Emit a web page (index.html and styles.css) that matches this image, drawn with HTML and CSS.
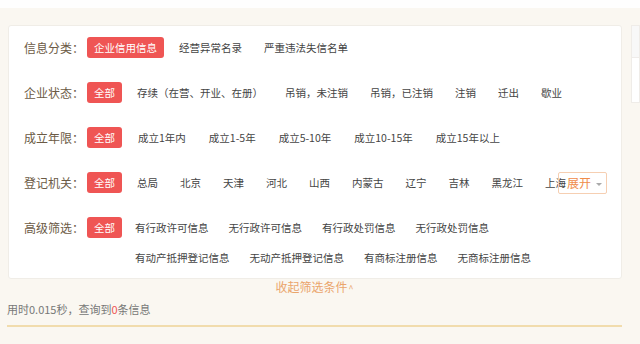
FILE: index.html
```html
<!DOCTYPE html>
<html lang="zh-CN">
<head>
    <meta charset="UTF-8">
    <title>筛选</title>
    <link rel="stylesheet" href="styles.css">
</head>
<body>
    <div class="topbar"></div>
    <div class="main">
        <div class="content">
            <div class="filter">
                <div class="ft-row">
                    <span class="ft-label">信息分类：</span>
                    <div class="ft-items">
                        <a href="#" class="active">企业信用信息</a>
                        <a href="#">经营异常名录</a>
                        <a href="#">严重违法失信名单</a>
                    </div>
                </div>
                <div class="ft-row">
                    <span class="ft-label">企业状态：</span>
                    <div class="ft-items">
                        <a href="#" class="active">全部</a>
                        <a href="#">存续（在营、开业、在册）</a>
                        <a href="#">吊销，未注销</a>
                        <a href="#">吊销，已注销</a>
                        <a href="#">注销</a>
                        <a href="#">迁出</a>
                        <a href="#">歇业</a>
                    </div>
                </div>
                <div class="ft-row">
                    <span class="ft-label">成立年限：</span>
                    <div class="ft-items ft-year">
                        <a href="#" class="active">全部</a>
                        <a href="#">成立1年内</a>
                        <a href="#">成立1-5年</a>
                        <a href="#">成立5-10年</a>
                        <a href="#">成立10-15年</a>
                        <a href="#">成立15年以上</a>
                    </div>
                </div>
                <div class="ft-row">
                    <span class="ft-label">登记机关：</span>
                    <div class="ft-items">
                        <a href="#" class="active">全部</a>
                        <a href="#">总局</a>
                        <a href="#">北京</a>
                        <a href="#">天津</a>
                        <a href="#">河北</a>
                        <a href="#">山西</a>
                        <a href="#">内蒙古</a>
                        <a href="#">辽宁</a>
                        <a href="#">吉林</a>
                        <a href="#">黑龙江</a>
                        <a href="#">上海</a>
                    </div>
                    <span class="ft-more">展开<i class="caret"></i></span>
                </div>
                <div class="ft-row">
                    <span class="ft-label">高级筛选：</span>
                    <div class="ft-items ft-adv">
                        <a href="#" class="active">全部</a>
                        <a href="#">有行政许可信息</a>
                        <a href="#">无行政许可信息</a>
                        <a href="#">有行政处罚信息</a>
                        <a href="#">无行政处罚信息</a>
                        <a href="#">有动产抵押登记信息</a>
                        <a href="#">无动产抵押登记信息</a>
                        <a href="#">有商标注册信息</a>
                        <a href="#">无商标注册信息</a>
                    </div>
                </div>
            </div>
            <div class="toggle">收起筛选条件<span class="up">^</span></div>
            <p class="result">用时0.015秒，查询到<em>0</em>条信息</p>
        </div>
        <div class="side">
            <div class="side-hd"></div>
            <div class="side-bd"></div>
        </div>
    </div>
</body>
</html>
```

FILE: styles.css
```css
* {
    box-sizing: border-box;
}

body {
    margin: 0;
    background-color: #faf7f1;
    font-family: "Noto Sans CJK SC", "Noto Sans", sans-serif;
    font-size: 10.5px;
    color: #444;
}

p {
    margin: 0;
}

a {
    color: #444;
    text-decoration: none;
}

.topbar {
    height: 8px;
    background-color: #fefefe;
}

.main {
    display: flex;
    gap: 9px;
    padding: 17px 0 0 7px;
}

.content {
    width: 615px;
    flex-shrink: 0;
}

.filter {
    margin-left: 1px;
    padding: 11px 15px 10px 15px;
    border: 1px solid #f0ede7;
    border-radius: 3px;
    background-color: #fff;
}

.ft-row {
    position: relative;
    display: flex;
    align-items: flex-start;
    margin-bottom: 24px;
}

.ft-row:last-child {
    margin-bottom: 0;
}

.ft-label {
    flex-shrink: 0;
    width: 63px;
    line-height: 21px;
    font-size: 12px;
    color: #6b5a45;
}

.ft-items {
    display: flex;
    flex-wrap: wrap;
    column-gap: 8px;
    row-gap: 9px;
}

.ft-items>a {
    padding: 0 7px;
    line-height: 21px;
    white-space: nowrap;
    border-radius: 3px;
}

.ft-items>a.active {
    background-color: #ef5554;
    color: #fff;
}

.ft-year {
    column-gap: 9px;
}

.ft-adv {
    column-gap: 6px;
}

.ft-adv>a:nth-child(6) {
    margin-left: 41px;
}

.ft-more {
    position: absolute;
    top: 0;
    right: -1px;
    width: 49px;
    height: 22px;
    padding-left: 8px;
    line-height: 20px;
    font-size: 12px;
    color: #f08c4a;
    border: 1px solid #f6cfb2;
    border-radius: 2px;
}

.caret {
    display: inline-block;
    margin-left: 5px;
    vertical-align: middle;
    border-top: 3px solid #aaa;
    border-left: 3px solid transparent;
    border-right: 3px solid transparent;
}

.toggle {
    text-align: center;
    line-height: 16px;
    font-size: 12px;
    color: #eaa56c;
}

.toggle .up {
    font-size: 9px;
    margin-left: 1px;
}

.result {
    margin-top: 2px;
    padding-bottom: 6px;
    line-height: 20px;
    font-size: 11px;
    color: #777;
    border-bottom: 2px solid #f1dcad;
}

.result em {
    font-style: normal;
    color: #ef5554;
}

.side {
    width: 60px;
    height: 78px;
    border: 1px solid #efece8;
    background-color: #fff;
}

.side-hd {
    height: 32px;
    background-color: #f8f8f8;
    border-bottom: 1px solid #efecea;
}
```
